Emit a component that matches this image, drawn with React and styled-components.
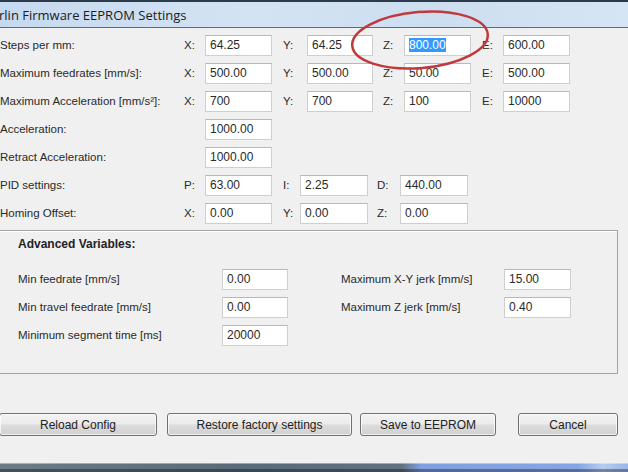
import React from "react";
import styled, { createGlobalStyle } from "styled-components";

const GlobalStyle = createGlobalStyle`
  html, body {
    margin: 0;
    padding: 0;
    background: #f0f0f0;
  }
  body {
    width: 628px;
    height: 472px;
    overflow: hidden;
    font-family: "Liberation Sans", Arial, sans-serif;
  }
`;

const Window = styled.div`
  position: relative;
  display: flex;
  flex-direction: column;
  width: 628px;
  height: 472px;
  background: #f0f0f0;
  overflow: hidden;
`;

const TitleBar = styled.div`
  height: 25px;
  border-top: 2px solid #2c3b4a;
  border-bottom: 1px solid #5a6d80;
  background: linear-gradient(
    to right,
    #c6d9ee 0%,
    #d3e3f4 40%,
    #cddef1 70%,
    #d6e5f5 100%
  );
  display: flex;
  align-items: center;
  font-family: "Open Sans", "Noto Sans", sans-serif;
  font-size: 13px;
  color: #1c1c1c;
  white-space: nowrap;
`;

const TitleText = styled.span`
  margin-left: -1px;
`;

const Form = styled.div`
  padding-top: 3px;
`;

const Row = styled.div`
  display: grid;
  grid-template-columns: ${(p) => p.$cols};
  align-items: center;
  height: 28px;
`;

const Label = styled.span`
  font-size: 11.5px;
  color: #2a2a2a;
  white-space: nowrap;
`;

const Pair = styled.div`
  display: flex;
  align-items: center;
`;

const Axis = styled.span`
  width: ${(p) => p.$w}px;
  font-size: 11.5px;
  color: #2a2a2a;
`;

const Field = styled.div`
  box-sizing: border-box;
  width: ${(p) => p.$w}px;
  height: 21px;
  background: #fff;
  border: 1px solid #cfcfcf;
  border-top-color: #b8b8b8;
  padding-left: 4px;
  font-size: 12px;
  line-height: 19px;
  color: #2a2a2a;
  white-space: nowrap;
`;

const Selected = styled.span`
  background: #3399ff;
  color: #fff;
`;

const Group = styled.div`
  margin: 3px 0 0 -2px;
  width: 620px;
  height: 144px;
  box-sizing: border-box;
  border: 1px solid #a3a3a3;
  box-shadow: inset 1px 1px 0 #fff;
  padding: 5px 0 0 19px;
`;

const GroupTitle = styled.div`
  font-size: 12px;
  font-weight: bold;
  color: #222;
  line-height: 16px;
  margin-bottom: 13px;
`;

const GroupGrid = styled.div`
  display: grid;
  grid-template-columns: 204px 66px 53px 163px 67px;
  grid-auto-rows: 28px;
  align-items: center;
`;

const RightLabel = styled(Label)`
  grid-column: 4;
`;

const Buttons = styled.div`
  display: flex;
  margin-top: 39px;
`;

const Button = styled.button`
  box-sizing: border-box;
  width: ${(p) => p.$w}px;
  height: 23px;
  margin-left: ${(p) => p.$ml}px;
  border: 1px solid #707070;
  border-radius: 3px;
  background: linear-gradient(
    to bottom,
    #f3f3f3 0%,
    #ebebeb 48%,
    #dddddd 52%,
    #d0d0d0 100%
  );
  box-shadow: inset 0 0 0 1px rgba(255, 255, 255, 0.7);
  font-family: "Liberation Sans", Arial, sans-serif;
  font-size: 12px;
  color: #222;
  padding: 0;
`;

const Taskbar = styled.div`
  margin-top: auto;
  height: 9px;
  background: linear-gradient(
      to bottom,
      rgba(255, 255, 255, 0.4) 0 1px,
      transparent 1px 6px,
      rgba(0, 0, 0, 0.35) 6px
    ),
    linear-gradient(
      to right,
      #6b7b88 0%,
      #586b7a 40%,
      #607282 64%,
      #7f9fe0 67%,
      #86a5e6 92%,
      #b4cdf0 96%,
      #9ab5e8 100%
    );
`;

const Circle = styled.svg`
  position: absolute;
  left: 345px;
  top: 4px;
  pointer-events: none;
`;

const axes = [
  { name: "X:", aw: 21, w: 67 },
  { name: "Y:", aw: 24, w: 66 },
  { name: "Z:", aw: 21, w: 67 },
  { name: "E:", aw: 21, w: 67 },
];

const axisRows = [
  { label: "Steps per mm:", vals: ["64.25", "64.25", "800.00", "600.00"], sel: 2 },
  { label: "Maximum feedrates [mm/s]:", vals: ["500.00", "500.00", "50.00", "500.00"] },
  { label: "Maximum Acceleration [mm/s²]:", vals: ["700", "700", "100", "10000"] },
];

const tripleRows = [
  {
    label: "PID settings:",
    cells: [
      { name: "P:", aw: 21, w: 67, v: "63.00" },
      { name: "I:", aw: 17, w: 68, v: "2.25" },
      { name: "D:", aw: 23, w: 68, v: "440.00" },
    ],
  },
  {
    label: "Homing Offset:",
    cells: [
      { name: "X:", aw: 21, w: 67, v: "0.00" },
      { name: "Y:", aw: 17, w: 68, v: "0.00" },
      { name: "Z:", aw: 23, w: 68, v: "0.00" },
    ],
  },
];

const advanced = [
  { label: "Min feedrate [mm/s]", v: "0.00", right: "Maximum X-Y jerk [mm/s]", rv: "15.00" },
  { label: "Min travel feedrate [mm/s]", v: "0.00", right: "Maximum Z jerk [mm/s]", rv: "0.40" },
  { label: "Minimum segment time [ms]", v: "20000" },
];

const buttons = [
  { text: "Reload Config", w: 158, ml: -1 },
  { text: "Restore factory settings", w: 185, ml: 10 },
  { text: "Save to EEPROM", w: 136, ml: 8 },
  { text: "Cancel", w: 100, ml: 22 },
];

export default function App() {
  return (
    <Window>
      <GlobalStyle />
      <TitleBar>
        <TitleText>rlin Firmware EEPROM Settings</TitleText>
      </TitleBar>

      <Form>
        {axisRows.map((r) => (
          <Row key={r.label} $cols="184px 99px 100px 99px 1fr">
            <Label>{r.label}</Label>
            {axes.map((a, i) => (
              <Pair key={a.name}>
                <Axis $w={a.aw}>{a.name}</Axis>
                <Field $w={a.w}>
                  {r.sel === i ? <Selected>{r.vals[i]}</Selected> : r.vals[i]}
                </Field>
              </Pair>
            ))}
          </Row>
        ))}
        <Row $cols="205px 67px">
          <Label>Acceleration:</Label>
          <Field $w={67}>1000.00</Field>
        </Row>
        <Row $cols="205px 67px">
          <Label>Retract Acceleration:</Label>
          <Field $w={67}>1000.00</Field>
        </Row>
        {tripleRows.map((r) => (
          <Row key={r.label} $cols="184px 99px 94px 1fr">
            <Label>{r.label}</Label>
            {r.cells.map((c) => (
              <Pair key={c.name}>
                <Axis $w={c.aw}>{c.name}</Axis>
                <Field $w={c.w}>{c.v}</Field>
              </Pair>
            ))}
          </Row>
        ))}
      </Form>

      <Group>
        <GroupTitle>Advanced Variables:</GroupTitle>
        <GroupGrid>
          {advanced.map((r) => (
            <React.Fragment key={r.label}>
              <Label>{r.label}</Label>
              <Field $w={66}>{r.v}</Field>
              {r.right && (
                <>
                  <RightLabel>{r.right}</RightLabel>
                  <Field $w={67}>{r.rv}</Field>
                </>
              )}
            </React.Fragment>
          ))}
        </GroupGrid>
      </Group>

      <Buttons>
        {buttons.map((b) => (
          <Button key={b.text} $w={b.w} $ml={b.ml}>
            {b.text}
          </Button>
        ))}
      </Buttons>

      <Taskbar />

      <Circle width="150" height="72" viewBox="0 0 150 72">
        <ellipse
          cx="75"
          cy="36"
          rx="68"
          ry="28"
          fill="none"
          stroke="#c0393d"
          strokeWidth="2.5"
          transform="rotate(-5 75 36)"
        />
      </Circle>
    </Window>
  );
}
